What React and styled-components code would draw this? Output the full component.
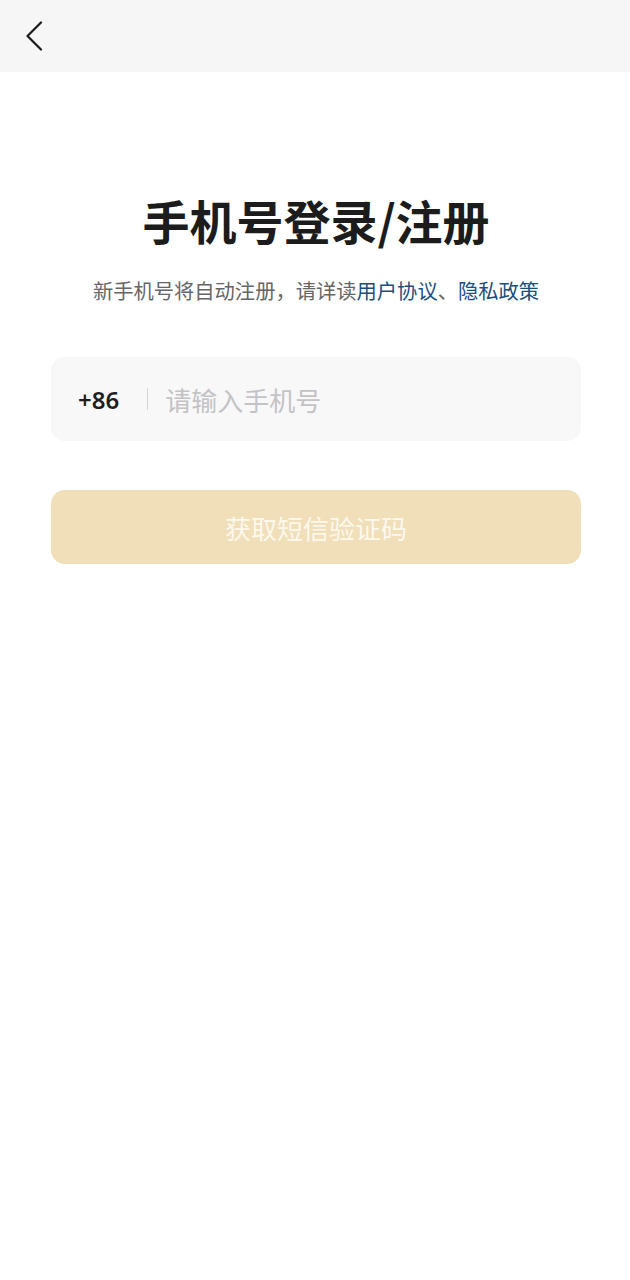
import React from 'react';
import styled, { createGlobalStyle } from 'styled-components';

const GlobalStyle = createGlobalStyle`
  html, body {
    margin: 0;
    padding: 0;
    background: #ffffff;
  }
  body {
    font-family: "Noto Sans CJK SC", "Noto Sans", sans-serif;
  }
`

const Page = styled.div`
  width: 630px;
  min-height: 1280px;
  background: #ffffff;
  display: flex;
  flex-direction: column;
`

const TopBar = styled.div`
  height: 72px;
  background: #f6f6f6;
  display: flex;
  align-items: center;
  padding-left: 24px;
`

const BackButton = styled.button`
  width: 22px;
  height: 34px;
  padding: 0;
  border: none;
  background: transparent;
  display: flex;
  align-items: center;
  justify-content: center;
  margin-bottom: 1px;
`

const Content = styled.div`
  display: flex;
  flex-direction: column;
  align-items: center;
  padding: 0 49px 0 51px;
`

const Title = styled.h1`
  margin: 116px 0 0;
  font-size: 47px;
  line-height: 64px;
  font-weight: 700;
  color: #1c1c1c;
  letter-spacing: 0;
`

const Subtitle = styled.p`
  margin: 23px 0 0;
  font-size: 20.3px;
  line-height: 30px;
  color: #666666;
`

const Link = styled.span`
  color: #1b4f80;
`

const PhoneField = styled.div`
  margin-top: 52px;
  width: 100%;
  height: 84px;
  box-sizing: border-box;
  border-radius: 14px;
  background: #f8f8f9;
  display: flex;
  align-items: center;
  padding-left: 27px;
`

const AreaCode = styled.span`
  font-family: "Noto Sans", "Noto Sans CJK SC", sans-serif;
  font-size: 24px;
  font-weight: 600;
  color: #1e1e1e;
`

const Divider = styled.span`
  width: 1px;
  height: 22px;
  background: #d6d6d6;
  margin: 0 17px 0 28px;
`

const PhoneInput = styled.input`
  flex: 1;
  border: none;
  outline: none;
  background: transparent;
  font-family: "Noto Sans CJK SC", sans-serif;
  font-size: 26px;
  color: #222;
  padding: 0;
  &::placeholder {
    color: #c3c3c6;
  }
`

const SubmitButton = styled.button`
  margin-top: 49px;
  width: 100%;
  height: 74px;
  border: none;
  border-radius: 14px;
  background: #f0dfb8;
  color: #fcf8ee;
  font-family: "Noto Sans CJK SC", sans-serif;
  font-size: 26px;
  display: flex;
  align-items: center;
  justify-content: center;
`

const App = () => {
  return (
    <>
      <GlobalStyle />
      <Page>
        <TopBar>
          <BackButton aria-label="返回">
            <svg width="20" height="30" viewBox="0 0 20 30" fill="none">
              <path d="M16 1.5 L2.5 15 L16 28.5" stroke="#1a1a1a" strokeWidth="2.2" strokeLinecap="round" strokeLinejoin="round" />
            </svg>
          </BackButton>
        </TopBar>
        <Content>
          <Title>手机号登录/注册</Title>
          <Subtitle>
            新手机号将自动注册，请详读<Link>用户协议</Link>、<Link>隐私政策</Link>
          </Subtitle>
          <PhoneField>
            <AreaCode>+86</AreaCode>
            <Divider />
            <PhoneInput type="tel" placeholder="请输入手机号" />
          </PhoneField>
          <SubmitButton>获取短信验证码</SubmitButton>
        </Content>
      </Page>
    </>
  )
}

export default App;
